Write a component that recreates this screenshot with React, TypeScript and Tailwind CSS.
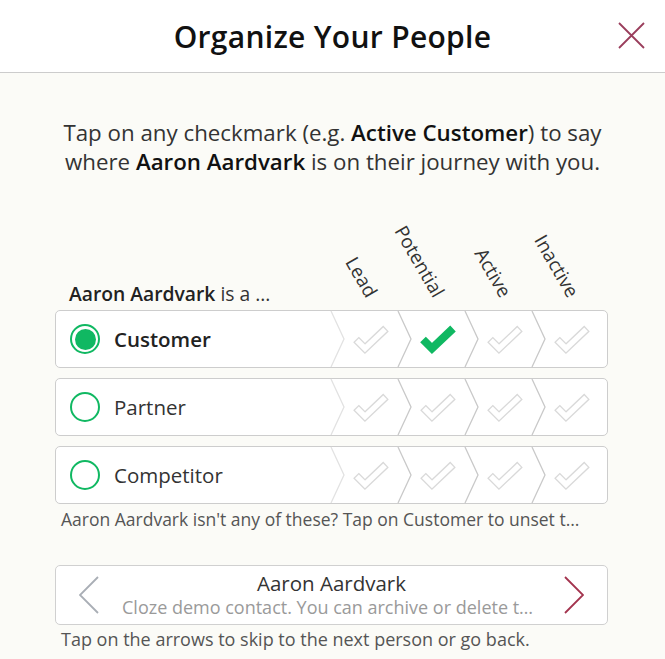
import React from 'react';

const STAGES = [
  { label: 'Lead', w: 'w-[67px]' },
  { label: 'Potential', w: 'w-[67px]' },
  { label: 'Active', w: 'w-[67px]' },
  { label: 'Inactive', w: 'w-[75px]' },
];

const ROWS = [
  { name: 'Customer', selected: true, stage: 1 },
  { name: 'Partner', selected: false, stage: -1 },
  { name: 'Competitor', selected: false, stage: -1 },
];

const CheckCell: React.FC<{ width: number; on: boolean; first: boolean }> = ({ width, on, first }) => (
  <svg width={width} height={56} className="block overflow-visible">
    <polyline
      points="0,0 13,28 0,56"
      fill="none"
      stroke={first ? '#e2e2e2' : '#c9c9c9'}
      strokeWidth={1.3}
    />
    <g transform="translate(22,13.5)">
      {on ? (
        <polyline points="3,15 12,24 33,4" fill="none" stroke="#10b862" strokeWidth={8} strokeLinejoin="miter" />
      ) : (
        <>
          <polyline points="3,15 12,24 33,4" fill="none" stroke="#d9d9d9" strokeWidth={8} strokeLinejoin="miter" />
          <polyline points="3.9,15.9 12,24 32.1,4.9" fill="none" stroke="#ffffff" strokeWidth={5.4} strokeLinejoin="miter" />
        </>
      )}
    </g>
  </svg>
);

const Radio: React.FC<{ on: boolean }> = ({ on }) => (
  <span className="flex h-[30px] w-[30px] shrink-0 items-center justify-center rounded-full border-[2.5px] border-[#10b862] bg-white">
    {on && <span className="h-[21px] w-[21px] rounded-full bg-[#10b862]" />}
  </span>
);

export default function App() {
  return (
    <div className="h-[659px] w-[665px] overflow-hidden bg-[#fbfbf7] font-['Open_Sans','Noto_Sans',sans-serif] text-[#333]">
      {/* header */}
      <div className="relative flex h-[73px] items-center justify-center border-b border-[#cccccc] bg-white">
        <h1 className="text-[30px] font-semibold tracking-[0.3px] text-[#111]">Organize Your People</h1>
        <button className="absolute right-[20px] top-[22px]">
          <svg width="27" height="27" viewBox="0 0 27 27" className="block">
            <path d="M1 1 L26 26 M26 1 L1 26" stroke="#9a3d5c" strokeWidth="1.8" fill="none" />
          </svg>
        </button>
      </div>

      <p className="pt-[45px] text-center text-[22.3px] leading-[29px] text-[#333]">
        Tap on any checkmark (e.g. <b className="font-semibold text-[#111]">Active Customer</b>) to say
        <br />
        where <b className="font-semibold text-[#111]">Aaron Aardvark</b> is on their journey with you.
      </p>

      <div className="mx-[55px] w-[553px]">
        {/* stage headings */}
        <div className="flex h-[134px] items-end px-[1px]">
          <div className="flex-1 pb-[5px] pl-[13px] text-[19.3px] leading-[22px]">
            <b className="font-semibold text-[#222]">Aaron Aardvark</b> is a ...
          </div>
          {STAGES.map((s) => (
            <div key={s.label} className={`relative h-full ${s.w}`}>
              <div className="absolute bottom-[9px] left-[32px] h-0 w-0">
                <span className="absolute bottom-0 right-0 origin-bottom-right rotate-[60deg] whitespace-nowrap text-[19px] leading-[22px] text-[#333]">
                  {s.label}
                </span>
              </div>
            </div>
          ))}
        </div>

        {/* rows */}
        <div className="flex flex-col gap-[10px]">
          {ROWS.map((r) => (
            <div key={r.name} className="flex h-[58px] items-stretch rounded-[5px] border border-[#cdcdcd] bg-white">
              <div className="flex flex-1 items-center gap-[14px] pl-[14px]">
                <Radio on={r.selected} />
                <span className={`text-[20.5px] ${r.selected ? 'font-semibold text-[#222]' : 'text-[#333]'}`}>{r.name}</span>
              </div>
              {STAGES.map((s, i) => (
                <CheckCell key={s.label} width={i === 3 ? 75 : 67} on={r.stage === i} first={i === 0} />
              ))}
            </div>
          ))}
        </div>

        <p className="mt-[5px] truncate px-[6px] pr-[20px] text-[17.5px] leading-[21px] text-[#555]">
          Aaron Aardvark isn't any of these? Tap on Customer to unset this relationship.
        </p>

        {/* person navigator */}
        <div className="mt-[35px] flex h-[60px] items-center rounded-[5px] border border-[#d0d0d0] bg-white">
          <button className="flex w-[66px] shrink-0 justify-center">
            <svg width="20" height="38" viewBox="0 0 20 38" className="block">
              <polyline points="19,1 1,19 19,37" fill="none" stroke="#a9aeb5" strokeWidth="1.8" />
            </svg>
          </button>
          <div className="min-w-0 flex-1 text-center">
            <div className="text-[20.5px] leading-[24px] text-[#333]">Aaron Aardvark</div>
            <div className="truncate text-[18px] leading-[24px] text-[#9a9a9a]">
              Cloze demo contact. You can archive or delete this person.
            </div>
          </div>
          <button className="flex w-[66px] shrink-0 justify-center">
            <svg width="20" height="38" viewBox="0 0 20 38" className="block">
              <polyline points="1,1 19,19 1,37" fill="none" stroke="#a3344e" strokeWidth="1.8" />
            </svg>
          </button>
        </div>

        <p className="mt-[4px] px-[6px] text-[18px] leading-[21px] text-[#555]">
          Tap on the arrows to skip to the next person or go back.
        </p>
      </div>
    </div>
  );
}
